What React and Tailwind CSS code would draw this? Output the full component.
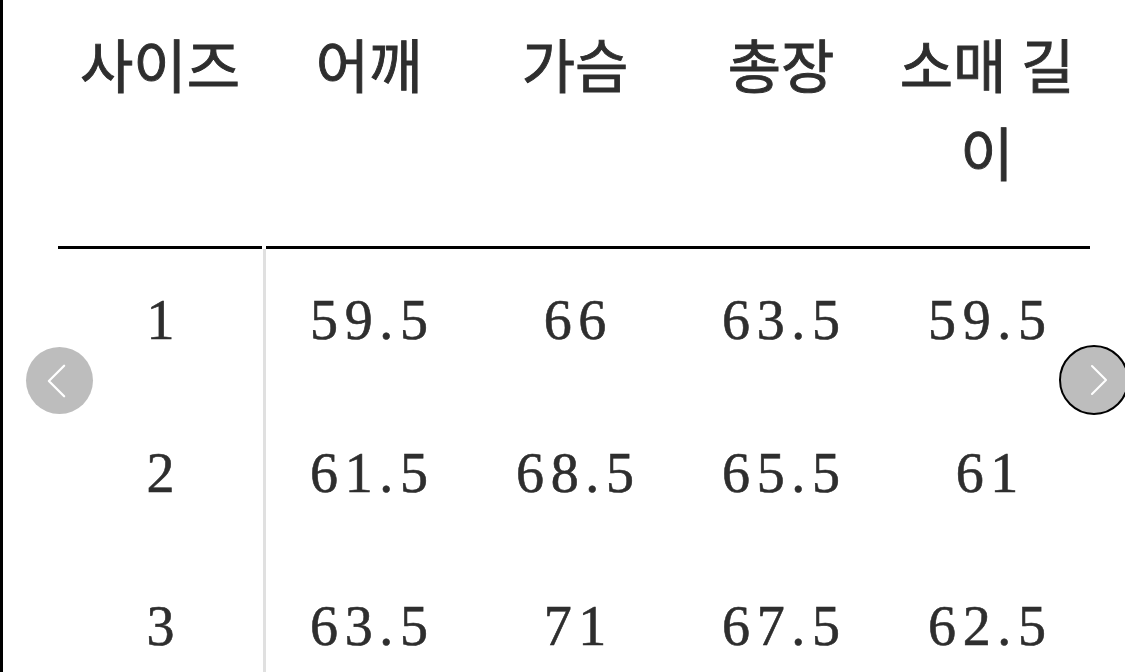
import React from 'react';
import { ChevronLeft, ChevronRight } from 'lucide-react';

const headers = ['사이즈', '어깨', '가슴', '총장', '소매 길이'];

const rows = [
  ['1', '59.5', '66', '63.5', '59.5'],
  ['2', '61.5', '68.5', '65.5', '61'],
  ['3', '63.5', '71', '67.5', '62.5'],
];

const App = () => {
  return (
    <div
      className="relative w-[1125px] h-[672px] overflow-hidden bg-white border-l-[3px] border-black text-[#333]"
      style={{ fontFamily: '"Liberation Serif", "Noto Sans CJK KR", serif' }}
    >
      <div className="ml-[55px] w-[1032px]">
        {/* header */}
        <div className="grid grid-cols-[208px_repeat(4,206px)] h-[249px]">
          {headers.map((h, i) => (
            <div
              key={h}
              className={`pt-[25px] px-[4px] text-center text-[58px] leading-[88px] text-[#2e2e2e] [-webkit-text-stroke:0.9px_#2e2e2e] border-b-[3px] border-black ${
                i === 0 ? 'mr-[4px]' : ''
              }`}
            >
              {h}
            </div>
          ))}
        </div>

        {/* body */}
        {rows.map((r) => (
          <div key={r[0]} className="grid grid-cols-[208px_repeat(4,206px)] h-[153px]">
            {r.map((v, i) => (
              <div
                key={i}
                className={`flex items-center justify-center pb-[12px] text-[56px] text-[#2e2e2e] [-webkit-text-stroke:0.6px_#2e2e2e] ${
                  i === 0 ? 'border-r-[3px] border-[#e0e0e0]' : 'tracking-[0.12em]'
                }`}
              >
                <span className={i === 0 ? '' : 'pl-[0.12em]'}>{v}</span>
              </div>
            ))}
          </div>
        ))}
      </div>

      {/* slider arrows */}
      <button className="absolute left-[23px] top-[347px] w-[67px] h-[67px] rounded-full bg-[#bdbdbd] flex items-center justify-center text-white">
        <ChevronLeft className="w-[64px] h-[64px] mr-[6px]" strokeWidth={0.9} />
      </button>
      <button className="absolute left-[1056px] top-[345px] w-[70px] h-[70px] rounded-full bg-[#bdbdbd] border-[2px] border-black flex items-center justify-center text-white">
        <ChevronRight className="w-[64px] h-[64px] ml-[10px]" strokeWidth={0.9} />
      </button>
    </div>
  );
};

export default App;
